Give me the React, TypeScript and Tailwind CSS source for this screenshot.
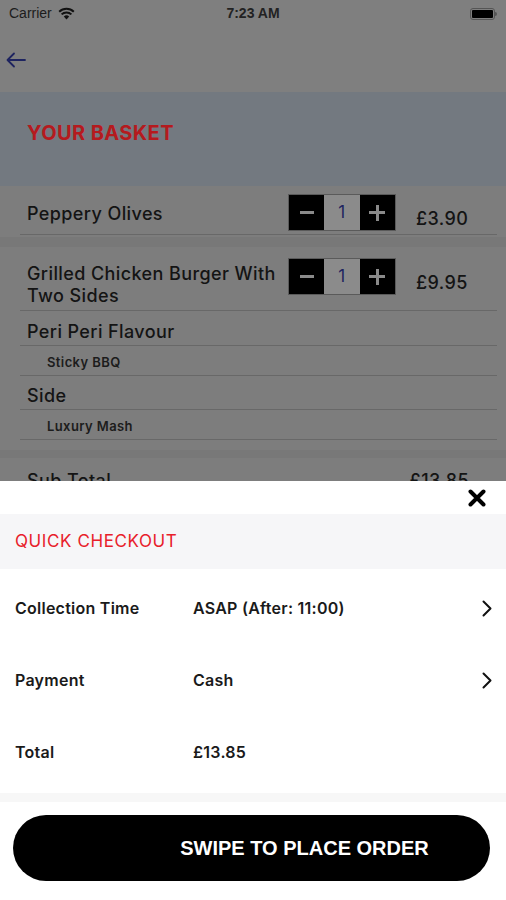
import React from "react";

const font = { fontFamily: 'Inter, "Liberation Sans", Arial, sans-serif' };

function Qty() {
  return (
    <div className="flex h-[37px] w-[108px] border border-[#5a5a5a]">
      <div className="flex w-[36px] items-center justify-center bg-black">
        <div className="h-[3px] w-[14px] bg-[#8a8a8a]" />
      </div>
      <div className="flex w-[36px] items-center justify-center bg-[#8b8b8b] text-[17px] text-[#1e2460]">1</div>
      <div className="relative flex w-[36px] items-center justify-center bg-black">
        <div className="absolute h-[3px] w-[16px] bg-[#8a8a8a]" />
        <div className="absolute h-[16px] w-[3px] bg-[#8a8a8a]" />
      </div>
    </div>
  );
}

function Row({ label, value, chevron }: { label: string; value: string; chevron?: boolean }) {
  return (
    <div className="flex h-[72px] items-center pl-[15px] pr-[14px] text-[16px] font-semibold tracking-[0.25px] text-[#1a1a1a]">
      <div className="w-[178px]">{label}</div>
      <div className="flex-1">{value}</div>
      {chevron && (
        <svg width="10" height="17" viewBox="0 0 10 17" fill="none">
          <path d="M1.5 1.5 L8.5 8.5 L1.5 15.5" stroke="#111" strokeWidth="2" strokeLinecap="round" strokeLinejoin="round" />
        </svg>
      )}
    </div>
  );
}

export default function App() {
  return (
    <div className="relative h-[900px] w-[506px] overflow-hidden bg-[#7f7f7f]" style={font}>
      {/* status bar */}
      <div className="flex h-[27px] items-center justify-between px-[9px] text-[14px] text-[#1c1c1c]" style={{ fontFamily: '"Liberation Sans", Arial, sans-serif' }}>
        <div className="flex w-[120px] items-center gap-[6px]">
          <span>Carrier</span>
          <svg width="17" height="13" viewBox="0 0 17 13">
            <path d="M8.5 12.5 L5.8 9.6 A3.8 3.8 0 0 1 11.2 9.6 Z" fill="#111" />
            <path d="M3.6 7.4 A7 7 0 0 1 13.4 7.4" stroke="#111" strokeWidth="2" fill="none" />
            <path d="M1.2 4.8 A10.5 10.5 0 0 1 15.8 4.8" stroke="#111" strokeWidth="2" fill="none" />
          </svg>
        </div>
        <span className="font-bold text-[#222]">7:23 AM</span>
        <div className="flex w-[120px] justify-end">
          <div className="flex items-center">
            <div className="flex h-[12px] w-[25px] items-center rounded-[3px] border border-[#555] p-[1px]">
              <div className="h-full w-full rounded-[1px] bg-black" />
            </div>
            <div className="h-[4px] w-[2px] rounded-r bg-[#555]" />
          </div>
        </div>
      </div>
      {/* nav */}
      <div className="flex h-[65px] items-center pl-[6px]">
        <svg width="20" height="16" viewBox="0 0 20 16" fill="none">
          <path d="M19 8 H2 M8 1.5 L1.5 8 L8 14.5" stroke="#1e2460" strokeWidth="1.8" strokeLinecap="round" strokeLinejoin="round" />
        </svg>
      </div>
      {/* header band */}
      <div className="flex h-[94px] items-center bg-[#737980] pl-[27px] pb-[12px]">
        <span className="text-[20px] font-bold tracking-[0.4px] text-[#b51a1e]">YOUR BASKET</span>
      </div>
      {/* item 1 */}
      <div className="bg-[#7d7d7d] pl-[20px] pr-[9px] pt-[8px] tracking-[0.4px]">
        <div className="flex h-[41px] items-start border-b border-[#686868]">
          <div className="flex-1 pl-[7px] pt-[6px] text-[18px] font-medium text-[#141414]">Peppery Olives</div>
          <Qty />
          <div className="w-[101px] pt-[11px] pl-[20px] text-[18px] font-medium text-[#141414]">£3.90</div>
        </div>
        <div className="h-[2px]" />
      </div>
      <div className="h-[10px] bg-[#787878]" />
      {/* item 2 */}
      <div className="bg-[#7d7d7d] pl-[20px] pr-[9px] pt-[11px] pb-[10px] tracking-[0.4px]">
        <div className="flex h-[53px] items-start border-b border-[#686868]">
          <div className="flex-1 pl-[7px] pt-[5px] text-[18px] font-medium leading-[22px] text-[#141414]">
            Grilled Chicken Burger With
            <br />
            Two Sides
          </div>
          <Qty />
          <div className="w-[101px] pt-[11px] pl-[20px] text-[18px] font-medium text-[#141414]">£9.95</div>
        </div>
        <div className="flex h-[35px] items-center border-b border-[#686868] pl-[7px] pt-[6px] text-[18px] font-medium text-[#141414]">Peri Peri Flavour</div>
        <div className="flex h-[30px] items-center border-b border-[#686868] pl-[27px] pt-[5px] text-[13px] font-semibold text-[#1c1c1c]">Sticky BBQ</div>
        <div className="flex h-[34px] items-center border-b border-[#686868] pl-[7px] pt-[6px] text-[18px] font-medium text-[#141414]">Side</div>
        <div className="flex h-[30px] items-center border-b border-[#686868] pl-[27px] pt-[5px] text-[13px] font-semibold text-[#1c1c1c]">Luxury Mash</div>
      </div>
      <div className="h-[8px] bg-[#787878]" />
      <div className="flex items-start justify-between bg-[#7d7d7d] pl-[27px] pr-[37px] pt-[9px] text-[18px] font-medium tracking-[0.4px] text-[#141414]">
        <span>Sub Total</span>
        <span>£13.85</span>
      </div>

      {/* bottom sheet */}
      <div className="absolute inset-x-0 top-[481px] bottom-0 flex flex-col bg-white">
        <div className="flex h-[33px] items-center justify-end pr-[20px]">
          <svg width="18" height="18" viewBox="0 0 18 18">
            <path d="M2.5 2.5 L15.5 15.5 M15.5 2.5 L2.5 15.5" stroke="#000" strokeWidth="4" strokeLinecap="round" />
          </svg>
        </div>
        <div className="flex h-[55px] items-center bg-[#f6f6f8] pl-[15px] text-[17px] tracking-[0.6px] text-[#e8202a]">QUICK CHECKOUT</div>
        <div className="pt-[3px]">
          <Row label="Collection Time" value="ASAP (After: 11:00)" chevron />
          <Row label="Payment" value="Cash" chevron />
          <Row label="Total" value="£13.85" />
        </div>
        <div className="mt-[5px] h-[9px] bg-[#f7f7f7]" />
        <div className="pl-[13px] pr-[16px] pt-[13px]">
          <div className="flex h-[66px] items-center justify-center rounded-[33px] bg-black pl-[106px]">
            <span className="text-[20px] font-bold text-white" style={{ fontFamily: '"Liberation Sans", Arial, sans-serif' }}>SWIPE TO PLACE ORDER</span>
          </div>
        </div>
      </div>
    </div>
  );
}
